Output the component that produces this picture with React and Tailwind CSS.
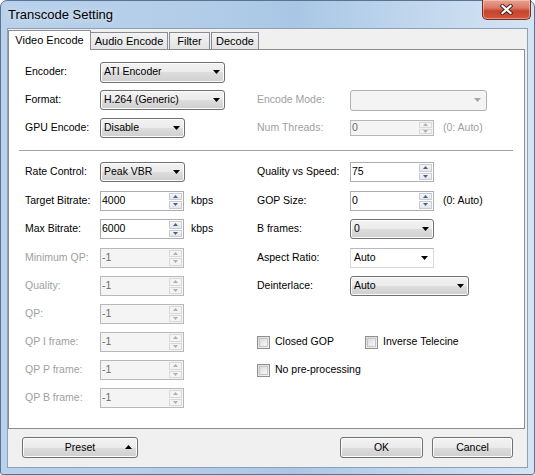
import React from "react";

const BTN_BG =
  "bg-[linear-gradient(#f2f2f2_0%,#ebebeb_50%,#dddddd_50%,#cfcfcf_100%)] shadow-[inset_0_0_0_1px_#fcfcfc]";

function Arrow({ color = "#000" }) {
  return (
    <svg width="7" height="4" viewBox="0 0 7 4">
      <path d="M0 0H7L3.5 4Z" fill={color} />
    </svg>
  );
}

function Sel({ cls, text, disabled }) {
  if (disabled) {
    return (
      <div
        className={`flex items-center justify-end rounded-[3px] border border-[#adb2b5] bg-[#f4f4f4] pr-[5px] ${cls}`}
      >
        <Arrow color="#a6a6a6" />
      </div>
    );
  }
  return (
    <div
      className={`flex items-center justify-between rounded-[3px] border border-[#707070] ${BTN_BG} pl-[3px] pr-[4px] ${cls}`}
    >
      <span className="text-black">{text}</span>
      <Arrow />
    </div>
  );
}

function Combo({ cls, text }) {
  return (
    <div
      className={`flex items-center justify-between border border-[#d5d9df] border-t-[#b5b9bf] bg-white pl-[3px] pr-[5px] ${cls}`}
    >
      <span>{text}</span>
      <Arrow />
    </div>
  );
}

function SpinArrow({ up, color }) {
  return (
    <svg width="5" height="3" viewBox="0 0 5 3">
      <path d={up ? "M0 3H5L2.5 0Z" : "M0 0H5L2.5 3Z"} fill={color} />
    </svg>
  );
}

function Spin({ value, disabled, cls = "h-[20px] w-[84px]" }) {
  const arrow = disabled ? "#b0b0b0" : "#4d6185";
  return (
    <div
      className={`flex border ${
        disabled ? "border-[#b5b9bd] bg-[#f4f4f4] text-[#6d6d6d]" : "border-[#abadb3] bg-white text-black"
      } ${cls}`}
    >
      <div className="flex flex-1 items-center pl-[1px]">{value}</div>
      <div className="flex w-[15px] flex-col gap-[1px] p-[1px]">
        <div
          className={`flex flex-1 items-center justify-center border ${
            disabled ? "border-[#d9d9d9] bg-[#f4f4f4]" : "border-[#c9ccd2] bg-[linear-gradient(#f6f6f6,#e4e6ea)]"
          }`}
        >
          <SpinArrow up color={arrow} />
        </div>
        <div
          className={`flex flex-1 items-center justify-center border ${
            disabled ? "border-[#d9d9d9] bg-[#f4f4f4]" : "border-[#c9ccd2] bg-[linear-gradient(#f6f6f6,#e4e6ea)]"
          }`}
        >
          <SpinArrow color={arrow} />
        </div>
      </div>
    </div>
  );
}

function Check({ label }) {
  return (
    <div className="flex items-center">
      <div className="h-[13px] w-[13px] border border-[#8e8f8f] bg-[linear-gradient(135deg,#d9dadb,#f5f5f5)] p-[1px]">
        <div className="h-full w-full border border-[#c6c6c6] bg-[linear-gradient(135deg,#dcdcdc,#f7f7f7)]" />
      </div>
      <span className="ml-[5px]">{label}</span>
    </div>
  );
}

function L({ children, dis }) {
  return <div className={`w-[75px] shrink-0 ${dis ? "text-[#a0a0a0]" : ""}`}>{children}</div>;
}
function R({ children, dis }) {
  return <div className={`w-[93px] shrink-0 ${dis ? "text-[#a0a0a0]" : ""}`}>{children}</div>;
}

function Row({ h, left, right }) {
  return (
    <div className={`flex items-center ${h}`}>
      <div className="flex w-[232px] shrink-0 items-center">{left}</div>
      <div className="flex items-center">{right}</div>
    </div>
  );
}

function Button({ cls, children }) {
  return (
    <div
      className={`relative flex items-center justify-center rounded-[3px] border border-[#707070] ${BTN_BG} ${cls}`}
    >
      {children}
    </div>
  );
}

export default function App() {
  return (
    <div className="h-[475px] w-[535px] bg-white font-['Liberation_Sans',Arial,sans-serif] text-[10.5px] text-black">
      <div className="flex h-[475px] w-[535px] flex-col rounded-t-[7px] rounded-b-[3px] border border-[#5a7391] bg-[linear-gradient(90deg,#b9d1ea_0%,#b3cde9_35%,#a9c7e5_55%,#c3d8ee_80%,#d5e4f4_100%)]">
        {/* title bar */}
        <div className="flex h-[27px] shrink-0 items-center pl-[7px]">
          <span className="text-[13px] text-black [text-shadow:0_0_6px_#e8f1fb]">Transcode Setting</span>
          <div className="-mt-[1px] mr-[3px] ml-auto flex h-[20px] w-[49px] items-center justify-center self-start rounded-b-[5px] border border-[#6e3026] border-t-0 bg-[linear-gradient(#e9a391_0%,#d97764_42%,#c8432c_58%,#d0563c_100%)] shadow-[inset_0_0_0_1px_rgba(255,210,200,0.5)]">
            <svg width="13" height="11" viewBox="0 0 13 11">
              <path d="M2.5 2L10.5 9M10.5 2L2.5 9" stroke="#4a2620" strokeWidth="4.2" strokeLinecap="square" />
              <path d="M2.5 2L10.5 9M10.5 2L2.5 9" stroke="#ffffff" strokeWidth="2.2" strokeLinecap="square" />
            </svg>
          </div>
        </div>

        {/* client area */}
        <div className="mx-[6px] flex h-[440px] flex-col border border-[#8c9fb5] bg-[#f0f0f0]">
          {/* tabs */}
          <div className="flex h-[20px] shrink-0 items-end">
            <div className="relative z-10 -mb-[1px] flex h-[20px] w-[83px] items-center justify-center border border-b-0 border-[#898c95] bg-white text-[11px]">
              Video Encode
            </div>
            <div className="flex h-[17px] w-[77px] items-center justify-center border border-b-0 border-l-0 border-[#898c95] bg-[linear-gradient(#f3f3f3,#e3e3e3)] pt-[1px] text-[11px]">
              Audio Encode
            </div>
            <div className="ml-[1px] flex h-[17px] w-[41px] items-center justify-center border border-b-0 border-[#898c95] bg-[linear-gradient(#f3f3f3,#e3e3e3)] pt-[1px] text-[11px]">
              Filter
            </div>
            <div className="ml-[1px] flex h-[17px] w-[48px] items-center justify-center border border-b-0 border-[#898c95] bg-[linear-gradient(#f3f3f3,#e3e3e3)] pt-[1px] text-[11px]">
              Decode
            </div>
          </div>

          {/* tab panel */}
          <div className="flex h-[380px] w-[517px] shrink-0 flex-col border border-[#898c95] bg-white pt-[8px] pl-[16px]">
            <Row
              h="h-[28px]"
              left={
                <>
                  <L>Encoder:</L>
                  <Sel cls="h-[21px] w-[125px]" text="ATI Encoder" />
                </>
              }
              right={null}
            />
            <Row
              h="h-[28px]"
              left={
                <>
                  <L>Format:</L>
                  <Sel cls="h-[20px] w-[125px]" text="H.264 (Generic)" />
                </>
              }
              right={
                <>
                  <R dis>Encode Mode:</R>
                  <Sel cls="h-[21px] w-[137px]" disabled />
                </>
              }
            />
            <Row
              h="h-[28px]"
              left={
                <>
                  <L>GPU Encode:</L>
                  <Sel cls="h-[20px] w-[85px]" text="Disable" />
                </>
              }
              right={
                <>
                  <R dis>Num Threads:</R>
                  <Spin value="0" disabled cls="h-[16px] w-[84px]" />
                  <span className="ml-[9px] text-[#a0a0a0]">(0: Auto)</span>
                </>
              }
            />

            <div className="-ml-[6px] mt-[8px] h-[1px] w-[494px] bg-[#a0a0a0]" />

            <div className="mt-[7px] flex flex-col">
              <Row
                h="h-[28px]"
                left={
                  <>
                    <L>Rate Control:</L>
                    <Sel cls="h-[20px] w-[85px]" text="Peak VBR" />
                  </>
                }
                right={
                  <>
                    <R>Quality vs Speed:</R>
                    <Spin value="75" />
                  </>
                }
              />
              <Row
                h="h-[29px]"
                left={
                  <>
                    <L>Target Bitrate:</L>
                    <Spin value="4000" />
                    <span className="ml-[7px]">kbps</span>
                  </>
                }
                right={
                  <>
                    <R>GOP Size:</R>
                    <Spin value="0" />
                    <span className="ml-[9px]">(0: Auto)</span>
                  </>
                }
              />
              <Row
                h="h-[28px]"
                left={
                  <>
                    <L>Max Bitrate:</L>
                    <Spin value="6000" />
                    <span className="ml-[7px]">kbps</span>
                  </>
                }
                right={
                  <>
                    <R>B frames:</R>
                    <Sel cls="h-[20px] w-[84px]" text="0" />
                  </>
                }
              />
              <Row
                h="h-[29px]"
                left={
                  <>
                    <L dis>Minimum QP:</L>
                    <Spin value="-1" disabled />
                  </>
                }
                right={
                  <>
                    <R>Aspect Ratio:</R>
                    <Combo cls="h-[20px] w-[84px]" text="Auto" />
                  </>
                }
              />
              <Row
                h="h-[28px]"
                left={
                  <>
                    <L dis>Quality:</L>
                    <Spin value="-1" disabled />
                  </>
                }
                right={
                  <>
                    <R>Deinterlace:</R>
                    <Sel cls="h-[20px] w-[119px]" text="Auto" />
                  </>
                }
              />
              <Row
                h="h-[28px]"
                left={
                  <>
                    <L dis>QP:</L>
                    <Spin value="-1" disabled />
                  </>
                }
                right={null}
              />
              <Row
                h="h-[28px]"
                left={
                  <>
                    <L dis>QP I frame:</L>
                    <Spin value="-1" disabled />
                  </>
                }
                right={
                  <>
                    <div className="w-[108px]">
                      <Check label="Closed GOP" />
                    </div>
                    <Check label="Inverse Telecine" />
                  </>
                }
              />
              <Row
                h="h-[28px]"
                left={
                  <>
                    <L dis>QP P frame:</L>
                    <Spin value="-1" disabled />
                  </>
                }
                right={<Check label="No pre-processing" />}
              />
              <Row
                h="h-[28px]"
                left={
                  <>
                    <L dis>QP B frame:</L>
                    <Spin value="-1" disabled />
                  </>
                }
                right={null}
              />
            </div>
          </div>

          {/* bottom buttons */}
          <div className="mt-[8px] flex px-[14px]">
            <Button cls="h-[21px] w-[116px]">
              <span>Preset</span>
              <span className="absolute right-[5px] top-[7px]">
                <svg width="7" height="4" viewBox="0 0 7 4">
                  <path d="M0 4H7L3.5 0Z" fill="#000" />
                </svg>
              </span>
            </Button>
            <Button cls="ml-auto h-[21px] w-[83px]">OK</Button>
            <Button cls="ml-[9px] h-[21px] w-[81px]">Cancel</Button>
          </div>
        </div>
      </div>
    </div>
  );
}
